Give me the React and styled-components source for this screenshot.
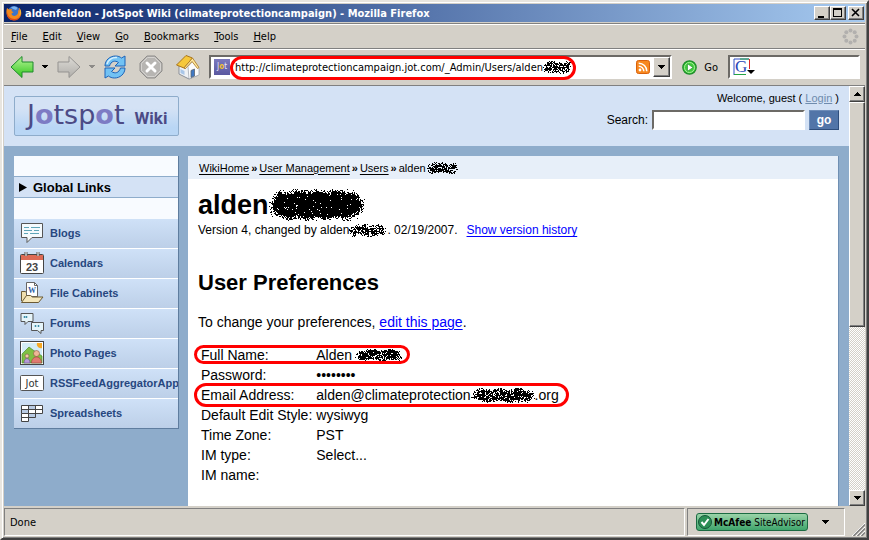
import React from 'react'
import styled, { createGlobalStyle, css } from 'styled-components'

const FACE = '#d4d0c8'
const UI_FONT = '"DejaVu Sans Condensed", "DejaVu Sans", sans-serif'
const PAGE_FONT = '"Liberation Sans", Arial, sans-serif'

const GlobalStyle = createGlobalStyle`
  *, *::before, *::after { box-sizing: border-box; }
  body { margin: 0; background: ${FACE}; }
  button, input { font: inherit; color: inherit; margin: 0; }
`

const raised = css`
  background: ${FACE};
  border: 1px solid;
  border-color: #fff #404040 #404040 #fff;
  box-shadow: inset -1px -1px 0 #808080;
`

const sunken = css`
  background: #fff;
  border: 2px solid;
  border-color: #6c6a66 #fff #fff #6c6a66;
`

/* window */

const Window = styled.div`
  height: 100vh;
  display: flex;
  flex-direction: column;
  padding: 2px;
  background: ${FACE};
  border: 2px solid;
  border-color: #e8e5df #404040 #404040 #e8e5df;
  box-shadow: inset 1px 1px 0 #fff, inset -1px -1px 0 #808080;
  font-family: ${UI_FONT};
  font-size: 11px;
  color: #000;
  overflow: hidden;
`

const TitleBar = styled.header`
  display: flex;
  align-items: center;
  height: 18px;
  flex: none;
  padding: 0 1px 0 2px;
  background: linear-gradient(to right, #0a246a, #a6caf0);
  color: #fff;
`

const WindowTitle = styled.h1`
  flex: 1;
  margin: 0 0 0 3px;
  font-size: 11px;
  font-weight: bold;
  white-space: nowrap;
  overflow: hidden;
`

const CaptionButton = styled.button`
  ${raised}
  width: 16px;
  height: 14px;
  padding: 0;
  display: flex;
  margin-left: ${(p) => (p.$apart ? '2px' : '0')};
`

const MenuBar = styled.nav`
  display: flex;
  align-items: center;
  gap: 15px;
  height: 26px;
  flex: none;
  margin-top: 1px;
  padding: 0 6px 0 7px;
  border-top: 1px solid #808080;
  border-bottom: 1px solid #808080;
  box-shadow: inset 0 1px 0 #fff;
`

const MenuItem = styled.button`
  border: 0;
  padding: 0;
  background: none;
  &::first-letter { text-decoration: underline; }
`

const Spring = styled.span`
  flex: 1;
`

const ToolBar = styled.div`
  display: flex;
  align-items: center;
  height: 37px;
  flex: none;
  padding: 0 5px 0 6px;
  border-bottom: 1px solid #808080;
  box-shadow: inset 0 1px 0 #fff;
`

const ToolButton = styled.button`
  display: flex;
  align-items: center;
  justify-content: center;
  flex: none;
  gap: 7px;
  border: 0;
  padding: 0;
  background: none;
  margin-right: ${(p) => p.$gap || 0}px;
`

const LocationBar = styled.div`
  ${sunken}
  flex: 1;
  display: flex;
  align-items: center;
  height: 24px;
  margin-right: 10px;
  padding-left: 3px;
`

const Favicon = styled.span`
  width: 16px;
  height: 16px;
  flex: none;
  background: linear-gradient(#7b78bd, #5a58a0);
  color: #e8e8f8;
  font-size: 8px;
  line-height: 16px;
  text-align: center;
  b { color: #f2c230; }
`

const Circled = styled.span`
  position: relative;
  display: flex;
  align-items: center;
  height: 20px;
  padding: 0 4px 0 5px;
  &::after {
    content: '';
    position: absolute;
    inset: -1px 0 -3px 0;
    border: 3px solid #f00;
    border-radius: 12px;
    pointer-events: none;
  }
`

const UrlInput = styled.input`
  field-sizing: content;
  border: 0;
  padding: 0;
  outline: 0;
  background: none;
`

const DropButton = styled.button`
  ${raised}
  width: 17px;
  height: 20px;
  padding: 0;
  margin-left: 3px;
  display: flex;
  align-items: center;
  justify-content: center;
`

const SearchBox = styled.label`
  ${sunken}
  display: flex;
  align-items: center;
  width: 132px;
  height: 24px;
  padding-left: 3px;
  input {
    width: 100px;
    border: 0;
    outline: 0;
    background: none;
  }
`

/* page */

const Viewport = styled.div`
  flex: 1;
  min-height: 0;
  display: flex;
`

const Page = styled.div`
  flex: 1;
  min-width: 0;
  overflow: hidden;
  background: #8eaccb;
  font-family: ${PAGE_FONT};
`

const PageHeader = styled.div`
  display: flex;
  justify-content: space-between;
  align-items: flex-start;
  height: 60px;
  padding: 4px 10px 0;
  background: #d4e2f5;
`

const Logo = styled.a`
  display: flex;
  align-items: baseline;
  gap: 10px;
  width: 165px;
  height: 40px;
  margin-top: 6px;
  padding-left: 12px;
  border: 1px solid #8eaccb;
  border-radius: 2px;
  background: linear-gradient(#d4e2f5 30%, #b9d6f5 80%);
  color: #4c4a86;
  font-family: "DejaVu Sans", sans-serif;
  font-size: 27px;
  line-height: 36px;
  text-decoration: none;
  b { color: #7d7bc4; }
`

const LogoSuffix = styled.span`
  font-family: Roboto, sans-serif;
  font-weight: bold;
  font-size: 17px;
`

const HeaderTools = styled.div`
  display: flex;
  flex-direction: column;
  align-items: flex-end;
  gap: 4px;
`

const Welcome = styled.div`
  font-size: 11px;
  line-height: 16px;
  a { color: #6f8bad; }
`

const SearchForm = styled.form`
  display: flex;
  align-items: center;
  gap: 4px;
  font-size: 12px;
  input {
    ${sunken}
    width: 153px;
    height: 20px;
  }
  button {
    width: 30px;
    height: 20px;
    padding: 0;
    border: 1px solid;
    border-color: #6d8cb8 #2f4e7c #2f4e7c #6d8cb8;
    background: #5275a8;
    color: #fff;
    font-weight: bold;
  }
`

const Columns = styled.div`
  display: flex;
  align-items: flex-start;
  gap: 9px;
  padding: 10px 10px 0;
`

const SideBar = styled.nav`
  width: 165px;
  flex: none;
  background: #f8fbff;
  border-right: 1px solid #5f7d9f;
  border-bottom: 1px solid #5f7d9f;
  overflow: hidden;
`

const SideHeading = styled.h2`
  display: flex;
  align-items: center;
  gap: 6px;
  height: 22px;
  margin: 20px 0 21px;
  padding-left: 5px;
  border-top: 1px solid #8eaccb;
  border-bottom: 1px solid #8eaccb;
  background: #d4e2f5;
  font-size: 13px;
`

const SideLink = styled.a`
  display: flex;
  align-items: center;
  gap: 6px;
  height: 30px;
  padding: 0 0 2px 6px;
  border-bottom: 1px solid #fff;
  background: linear-gradient(#cfe1f7, #bccfe8);
  color: #27477f;
  font-size: 11px;
  font-weight: bold;
  text-decoration: none;
  white-space: nowrap;
  svg { flex: none; }
  &:last-child { height: 29px; border-bottom: 0; }
`

const Main = styled.main`
  flex: 1;
  min-width: 0;
  min-height: 600px;
  background: #fff;
  border-right: 1px solid #6f8fb3;
`

const Crumbs = styled.nav`
  display: flex;
  align-items: center;
  height: 23px;
  padding-left: 11px;
  background: #e7eff9;
  font-size: 11px;
  a { color: #000; text-underline-offset: 2px; }
  b { margin: 0 2px; }
`

const Article = styled.article`
  padding: 10px;
  a { color: #00f; text-underline-offset: 2px; }
`

const PageTitle = styled.h1`
  display: flex;
  align-items: center;
  height: 32px;
  margin: 0;
  font-size: 27px;
`

const Revision = styled.p`
  display: flex;
  align-items: center;
  height: 18px;
  margin: 0;
  font-size: 12px;
  a { margin-left: 9px; }
`

const SectionTitle = styled.h2`
  margin: 31px 0 16px;
  font-size: 22px;
  line-height: 26px;
`

const Intro = styled.p`
  margin: 0 0 13px;
  font-size: 14px;
  line-height: 20px;
`

const Prefs = styled.table`
  border-spacing: 2px 0;
  font-size: 14px;
  line-height: 18px;
  th, td {
    padding: 1px;
    text-align: left;
    font-weight: normal;
    white-space: nowrap;
  }
`

const PrefRow = styled.tr`
  position: relative;
  ${(p) => p.$ring && css`
    th::after {
      content: '';
      position: absolute;
      left: -6px;
      top: ${p.$tight ? 0 : -2}px;
      width: ${p.$ring}px;
      height: ${p.$tight ? 19 : 24}px;
      border: 3px solid #f00;
      border-radius: 12px;
    }
  `}
`

const Value = styled.span`
  display: flex;
  align-items: center;
`

/* scroll bar and status bar */

const ScrollBar = styled.div`
  display: flex;
  flex-direction: column;
  width: 16px;
  flex: none;
  background: repeating-conic-gradient(#fff 0 25%, ${FACE} 0 50%) 0 0 / 2px 2px;
`

const ScrollButton = styled.button`
  ${raised}
  display: flex;
  align-items: center;
  justify-content: center;
  height: 16px;
  flex: none;
  padding: 0;
`

const Track = styled.div`
  flex: 1;
`

const Thumb = styled.div`
  ${raised}
  height: 58%;
`

const StatusBar = styled.footer`
  display: flex;
  gap: 2px;
  height: 30px;
  flex: none;
  padding-top: 2px;
`

const StatusPanel = styled.div`
  display: flex;
  align-items: center;
  height: 28px;
  flex: ${(p) => (p.$width ? `0 0 ${p.$width}px` : 1)};
  padding-left: ${(p) => (p.$width ? 8 : 5)}px;
  gap: 14px;
  border: 1px solid;
  border-color: #808080 #fff #fff #808080;
`

const Advisor = styled.button`
  display: flex;
  align-items: center;
  gap: 2px;
  width: 112px;
  height: 18px;
  padding: 0 0 0 1px;
  border: 1px solid #1b6b42;
  border-radius: 3px;
  background: linear-gradient(#9ad3a8, #3fa56c);
  white-space: nowrap;
  font-size: 10px;
`

const Grip = styled.div`
  width: 18px;
  display: flex;
  align-items: flex-end;
  justify-content: flex-end;
`

/* drawings */

// spray of single dots, dense in the middle and thin at the rim
const sprayPath = (w, h, density, seed) => {
  let s = seed
  let d = ''
  for (let y = 0; y < h; y++) {
    for (let x = 0; x < w; x++) {
      s = (s * 1664525 + 1013904223) % 4294967296
      const nx = Math.abs((x + 0.5) / w * 2 - 1)
      const ny = Math.abs((y + 0.5 + Math.sin(x / 3 + seed)) / h * 2 - 1)
      const r = nx ** 6 + ny ** 2
      const p = density ** 2 * (1 - r) * 2
      if (s / 4294967296 < Math.min(Math.max(p, r < 1.2 ? 0.05 : 0), density)) d += `M${x} ${y}h1v1h-1z`
    }
  }
  return d
}

const SprayBox = styled.svg`
  flex: none;
  margin-left: ${(p) => p.$left || 0}px;
`

const Spray = ({ w, h, density = 0.7, seed = 7, left }) => (
  <SprayBox width={w} height={h} $left={left} shapeRendering="crispEdges" aria-hidden="true">
    <path d={sprayPath(w, h, density, seed)} />
  </SprayBox>
)

const Caret = ({ up, color = '#000', w = 7 }) => (
  <svg width={w} height="4" viewBox="0 0 7 4" shapeRendering="crispEdges">
    <path d={up ? 'M3 0h1v1h1v1h1v1h1v1H0V3h1V2h1V1h1z' : 'M0 0h7v1H6v1H5v1H4v1H3V3H2V2H1V1H0z'} fill={color} />
  </svg>
)

const FirefoxIcon = () => (
  <svg width="16" height="16" viewBox="0 0 16 16">
    <circle cx="8" cy="7.5" r="6.5" fill="#3b74c9" />
    <path d="M5 2.5c2-1.500 5-1 6.500.5L10 5 7 4z" fill="#7db4ee" />
    <path d="M1 3l2 1.500 3-.5-.5 2 2 1.200-2 1.300c0 2 2.500 3 4.500 2 2-1 2.500-3 2-6l1.200 1.500L13 2.500c3 3 3 8 .2 10.500-3 3-8 3-10.800 0C.3 10.500-.2 6.500 1 3z" fill="#f28a1c" />
    <path d="M1 6c0 5 3.500 8 7.500 8 3 0 5-1.500 6-4-.3 3.500-3.500 5.500-6.500 5.500C3.500 15.500 0 12 1 6z" fill="#d9481c" />
    <path d="M14 4c1 2 1 5-.5 7 .5-2.500.5-5 .5-7z" fill="#ffd84a" />
  </svg>
)

const ArrowIcon = ({ back }) => (
  <svg width="24" height="24" viewBox="0 0 24 24">
    <defs>
      <linearGradient id={back ? 'arrowBack' : 'arrowFwd'} x1="0" y1="0" x2="0" y2="1">
        <stop offset="0" stopColor={back ? '#b9f59a' : '#dddbd6'} />
        <stop offset="1" stopColor={back ? '#2fc51b' : '#b0aeaa'} />
      </linearGradient>
    </defs>
    <path
      d={back ? 'M1 12L12 1.500V7h11v10H12v5.500z' : 'M23 12L12 1.500V7H1v10h11v5.500z'}
      fill={back ? 'url(#arrowBack)' : 'url(#arrowFwd)'}
      stroke={back ? '#1c8a2b' : '#959391'}
      strokeLinejoin="round"
    />
  </svg>
)

const ReloadIcon = () => (
  <svg width="24" height="24" viewBox="0 0 24 24">
    <g fill="#72c2f4" stroke="#1c62b8" strokeLinejoin="round">
      <path d="M2 11C2 5 7 1 12.500 1c2.500 0 4.500.8 6 2L22 1v10H12l3.500-3.500C12 5 8 6 6.500 11z" />
      <path d="M22 13c0 6-5 10-10.500 10-2.500 0-4.500-.8-6-2L2 23V13h10l-3.500 3.500C12 19 16 18 17.500 13z" />
    </g>
    <path d="M4 9c1-4 5-7 10-6.500" fill="none" stroke="#d6f0ff" strokeWidth="1.500" />
  </svg>
)

const StopIcon = () => (
  <svg width="24" height="24" viewBox="0 0 24 24">
    <path d="M8 1h8l7 7v8l-7 7H8l-7-7V8z" fill="#b7b5b2" stroke="#8f8d8b" />
    <path d="M8.500 2.500h7l6 6v7l-6 6h-7l-6-6v-7z" fill="none" stroke="#d5d3d0" />
    <path d="M8 8l8 8M16 8l-8 8" stroke="#fff" strokeWidth="3" strokeLinecap="round" />
  </svg>
)

const HomeIcon = () => (
  <svg width="26" height="26" viewBox="0 0 26 26">
    <path d="M4 11l5 2 7-7 7 8v7l-9 4-10-5z" fill="#eef1f5" stroke="#8a8f98" />
    <path d="M13 12.500l5-5.500 6 7.500v6.500l-10 4z" fill="#fbfcfd" stroke="#9aa0aa" strokeWidth=".7" />
    <path d="M1.500 11L11 1.500 17.500 4 9 14z" fill="#f6c83c" stroke="#a8741c" strokeLinejoin="round" />
    <path d="M9 14l8.500-10 6.500 9.500-1.500 1L17 7.500l-7 7.500z" fill="#ffe9a0" stroke="#a8741c" strokeWidth=".8" />
    <path d="M16 16.500l3.500-1.500v7l-3.500 1.500z" fill="#3f79c4" stroke="#5c6470" strokeWidth=".8" />
    <path d="M5.500 15l4 2v4l-4-2z" fill="#a9c6e8" />
  </svg>
)

const FeedIcon = () => (
  <svg width="14" height="14" viewBox="0 0 14 14">
    <rect x=".5" y=".5" width="13" height="13" rx="2" fill="#f7881f" stroke="#d9610c" />
    <circle cx="4" cy="10" r="1.400" fill="#fff" />
    <path d="M2.700 6.200A5 5 0 017.800 11.300M2.700 3.200a8 8 0 018.100 8.100" fill="none" stroke="#fff" strokeWidth="1.500" />
  </svg>
)

const GoIcon = () => (
  <svg width="15" height="15" viewBox="0 0 15 15">
    <circle cx="7.500" cy="7.500" r="6.700" fill="#3ec83a" stroke="#1d8c2a" strokeWidth="1.200" />
    <circle cx="7.500" cy="7.500" r="5" fill="none" stroke="#a9f09c" />
    <path d="M5.500 3.800l5.500 3.700-5.500 3.700z" fill="#fff" stroke="#1d8c2a" strokeWidth=".6" />
  </svg>
)

const GoogleIcon = () => (
  <svg width="22" height="18" viewBox="0 0 22 18">
    <rect x="1" y="2" width="15" height="15" fill="#fff" />
    <path d="M1 17V1h15" fill="none" stroke="#2e4fc4" />
    <path d="M1 16.500h12" stroke="#22a344" />
    <path d="M7 1h9" stroke="#22a344" />
    <path d="M16.500 1v10" stroke="#d8262c" />
    <text x="2" y="14" fontFamily="Liberation Serif" fontSize="17" fill="#2a47b8">G</text>
    <path d="M14 12h8l-4 4z" />
  </svg>
)

const Throbber = () => (
  <svg width="17" height="17" viewBox="0 0 17 17" fill="#b2b0ae">
    {[[8.5, 2.5], [12.7, 4.3], [14.5, 8.5], [12.7, 12.7], [8.5, 14.5], [4.3, 12.7], [2.5, 8.5], [4.3, 4.3]].map(([x, y]) => (
      <circle key={`${x}-${y}`} cx={x} cy={y} r="2" />
    ))}
  </svg>
)

const ShieldIcon = () => (
  <svg width="14" height="14" viewBox="0 0 14 14">
    <circle cx="7" cy="7" r="6.500" fill="#2c8f56" stroke="#15573a" />
    <path d="M3.500 7l2.500 3 4.500-6" fill="none" stroke="#fff" strokeWidth="2" />
  </svg>
)

const GripIcon = () => (
  <svg width="13" height="13" viewBox="0 0 13 13">
    <path d="M0 13L13 0M4 13l9-9M8 13l5-5" stroke="#fff" />
    <path d="M1.500 13L13 1.500M5.500 13L13 5.500M9.500 13L13 9.500" stroke="#808080" strokeWidth="1.500" />
  </svg>
)

const icons = {
  blog: (
    <>
      <path d="M1.500 2.500h21v14H12l-5 5v-5H1.500z" fill="#f4fafd" stroke="#555" />
      <path d="M4 6.500h5m2 0h9M4 9.500h8m2 0h5M4 12.500h4m2 0h9" stroke="#5fa5b8" />
    </>
  ),
  calendar: (
    <>
      <rect x=".5" y="3.500" width="23" height="19" rx="1" fill="#fff" stroke="#444" />
      <path d="M1 4h22v5H1z" fill="#dd6a55" />
      <path d="M6 1v4M18 1v4" stroke="#555" strokeWidth="3" />
      <path d="M6 1v4M18 1v4" stroke="#fff" />
      <text x="12" y="19.500" textAnchor="middle" fontFamily="Liberation Sans" fontWeight="bold" fontSize="11" fill="#444">23</text>
    </>
  ),
  cabinet: (
    <>
      <path d="M1.500 20V10.500h4l1.500 2h10v8" fill="#f0dfae" stroke="#6b5a35" />
      <path d="M6.500 1.500h8l3 3v11h-11z" fill="#fff" stroke="#666" />
      <path d="M14.500 1.500v3h3" fill="none" stroke="#666" />
      <text x="8" y="12" fontFamily="Liberation Serif" fontWeight="bold" fontSize="8" fill="#2d62a8">W</text>
      <path d="M1.500 21.500l5-7h4l2 1.500h10.500l-4.500 5.500z" fill="#f5e7bb" stroke="#6b5a35" />
    </>
  ),
  forum: (
    <>
      <path d="M1 2.500h12v8H8l-3 3v-3H1z" fill="#e6f5fa" stroke="#555" />
      <path d="M4.500 5v2m2-2v2" stroke="#3f8fa8" strokeWidth="1.500" />
      <path d="M11.500 11.500h12v8h-2.500v3l-3.500-3h-6z" fill="#e6f5fa" stroke="#555" />
      <path d="M15.500 14v2m3-2v2" stroke="#3f8fa8" strokeWidth="1.500" />
    </>
  ),
  photo: (
    <>
      <rect x=".5" y=".5" width="23" height="23" fill="#fff" stroke="#444" />
      <path d="M2 2h20v20H2z" fill="#d3ecf7" />
      <path d="M17 2h5v5c-3 1-6-2-5-5z" fill="#f7a823" />
      <path d="M2 13l7-7 4 3 9 6v7H2z" fill="#7fc043" stroke="#4c8a28" strokeWidth=".7" />
      <circle cx="7" cy="15" r="2" fill="#f2c9a8" stroke="#7a5648" strokeWidth=".6" />
      <path d="M4 22c0-6 6-6 6 0z" fill="#b79ad8" stroke="#6f528f" strokeWidth=".6" />
      <circle cx="16.500" cy="12.500" r="3" fill="#eeb896" stroke="#8a4f3c" strokeWidth=".6" />
      <path d="M11.500 22c0-8 10-8 10 0z" fill="#e07a70" stroke="#9c4038" strokeWidth=".6" />
    </>
  ),
  jot: (
    <>
      <rect x=".5" y="4.500" width="23" height="15" rx="1" fill="#fff" stroke="#555" />
      <text x="12" y="15.500" textAnchor="middle" fontFamily="DejaVu Sans" fontWeight="normal" fontSize="10" fill="#333">Jot</text>
    </>
  ),
  sheet: (
    <>
      <path d="M1.500 4.500h21v8h-7v4h-7v4h-7z" fill="#fff" />
      <path d="M8.500 4.500h7v4h-7zM1.500 8.500h7v4h-7zM8.500 12.500h7v4h-7z" fill="#b9cbe3" />
      <path d="M1.500 4.500h21v8h-21zM1.500 8.500h21M1.500 12.500v8h7v-16M15.500 4.500v12h-14" fill="none" stroke="#444" />
    </>
  ),
}

const SideIcon = ({ name }) => (
  <svg width="24" height="24" viewBox="0 0 24 24" aria-hidden="true">{icons[name]}</svg>
)

const menus = ['File', 'Edit', 'View', 'Go', 'Bookmarks', 'Tools', 'Help']

const links = [
  ['blog', 'Blogs'],
  ['calendar', 'Calendars'],
  ['cabinet', 'File Cabinets'],
  ['forum', 'Forums'],
  ['photo', 'Photo Pages'],
  ['jot', 'RSSFeedAggregatorApp'],
  ['sheet', 'Spreadsheets'],
]

const prefs = [
  { label: 'Full Name:', value: <>Alden<Spray w={48} h={12} density={0.8} seed={21} left={3} /></>, ring: 216, tight: true },
  { label: 'Password:', value: '••••••••' },
  { label: 'Email Address:', value: <>alden@climateprotection<Spray w={64} h={15} density={0.8} seed={5} />.org</>, ring: 375 },
  { label: 'Default Edit Style:', value: 'wysiwyg' },
  { label: 'Time Zone:', value: 'PST' },
  { label: 'IM type:', value: 'Select...' },
  { label: 'IM name:', value: '' },
]

const BrowserChrome = () => (
  <>
    <TitleBar>
      <FirefoxIcon />
      <WindowTitle>aldenfeldon - JotSpot Wiki (climateprotectioncampaign) - Mozilla Firefox</WindowTitle>
      <CaptionButton aria-label="Minimize">
        <svg width="14" height="12"><path d="M3 9h6v2H3z" /></svg>
      </CaptionButton>
      <CaptionButton aria-label="Maximize">
        <svg width="14" height="12" shapeRendering="crispEdges"><path d="M2 1h9v9H2zM3 3v6h7V3z" fillRule="evenodd" /></svg>
      </CaptionButton>
      <CaptionButton aria-label="Close" $apart>
        <svg width="14" height="12"><path d="M3 2l7 7M10 2L3 9" stroke="#000" strokeWidth="1.600" /></svg>
      </CaptionButton>
    </TitleBar>
    <MenuBar>
      {menus.map((m) => <MenuItem key={m}>{m}</MenuItem>)}
      <Spring />
      <Throbber />
    </MenuBar>
    <ToolBar>
      <ToolButton aria-label="Back" $gap={8}><ArrowIcon back /></ToolButton>
      <ToolButton aria-label="Back history" $gap={9}><Caret w={6} /></ToolButton>
      <ToolButton aria-label="Forward" $gap={8}><ArrowIcon /></ToolButton>
      <ToolButton aria-label="Forward history" $gap={8}><Caret w={6} color="#8d8b88" /></ToolButton>
      <ToolButton aria-label="Reload" $gap={12}><ReloadIcon /></ToolButton>
      <ToolButton aria-label="Stop" $gap={12}><StopIcon /></ToolButton>
      <ToolButton aria-label="Home" $gap={8}><HomeIcon /></ToolButton>
      <LocationBar>
        <Favicon>J<b>o</b>t</Favicon>
        <Circled>
          <UrlInput aria-label="Address" defaultValue="http://climateprotectioncampaign.jot.com/_Admin/Users/alden" />
          <Spray w={29} h={13} seed={11} />
        </Circled>
        <Spring />
        <FeedIcon />
        <DropButton aria-label="Show addresses"><Caret /></DropButton>
      </LocationBar>
      <ToolButton $gap={10}><GoIcon />Go</ToolButton>
      <SearchBox>
        <GoogleIcon />
        <input aria-label="Web search" />
      </SearchBox>
    </ToolBar>
  </>
)

const WikiPage = () => (
  <Page>
    <PageHeader>
      <Logo href="#home">
        <span>J<b>o</b>tsp<b>o</b>t</span>
        <LogoSuffix>Wiki</LogoSuffix>
      </Logo>
      <HeaderTools>
        <Welcome>Welcome, guest ( <a href="#login">Login</a> )</Welcome>
        <SearchForm onSubmit={(e) => e.preventDefault()}>
          <label htmlFor="wiki-search">Search:</label>
          <input id="wiki-search" type="text" />
          <button type="submit">go</button>
        </SearchForm>
      </HeaderTools>
    </PageHeader>
    <Columns>
      <SideBar>
        <SideHeading>
          <svg width="8" height="9"><path d="M0 0l8 4.500L0 9z" /></svg>
          Global Links
        </SideHeading>
        {links.map(([icon, text]) => (
          <SideLink key={text} href="#links"><SideIcon name={icon} />{text}</SideLink>
        ))}
      </SideBar>
      <Main>
        <Crumbs>
          <a href="#wikihome">WikiHome</a><b>»</b>
          <a href="#management">User Management</a><b>»</b>
          <a href="#users">Users</a><b>»</b>
          <span>alden</span><Spray w={33} h={12} seed={3} />
        </Crumbs>
        <Article>
          <PageTitle>alden<Spray w={96} h={32} density={0.97} seed={17} /></PageTitle>
          <Revision>
            Version 4, changed by alden<Spray w={38} h={13} seed={29} />. 02/19/2007.
            <a href="#history">Show version history</a>
          </Revision>
          <SectionTitle>User Preferences</SectionTitle>
          <Intro>To change your preferences, <a href="#edit">edit this page</a>.</Intro>
          <Prefs>
            <tbody>
              {prefs.map((p) => (
                <PrefRow key={p.label} $ring={p.ring} $tight={p.tight}>
                  <th scope="row">{p.label}</th>
                  <td><Value>{p.value}</Value></td>
                </PrefRow>
              ))}
            </tbody>
          </Prefs>
        </Article>
      </Main>
    </Columns>
  </Page>
)

const App = () => (
  <>
    <GlobalStyle />
    <Window>
      <BrowserChrome />
      <Viewport>
        <WikiPage />
        <ScrollBar>
          <ScrollButton aria-label="Scroll up"><Caret up /></ScrollButton>
          <Track><Thumb /></Track>
          <ScrollButton aria-label="Scroll down"><Caret /></ScrollButton>
        </ScrollBar>
      </Viewport>
      <StatusBar>
        <StatusPanel>Done</StatusPanel>
        <StatusPanel $width={158}>
          <Advisor><ShieldIcon /><span><b>McAfee</b> SiteAdvisor</span></Advisor>
          <Caret />
        </StatusPanel>
        <Grip><GripIcon /></Grip>
      </StatusBar>
    </Window>
  </>
)

export default App
